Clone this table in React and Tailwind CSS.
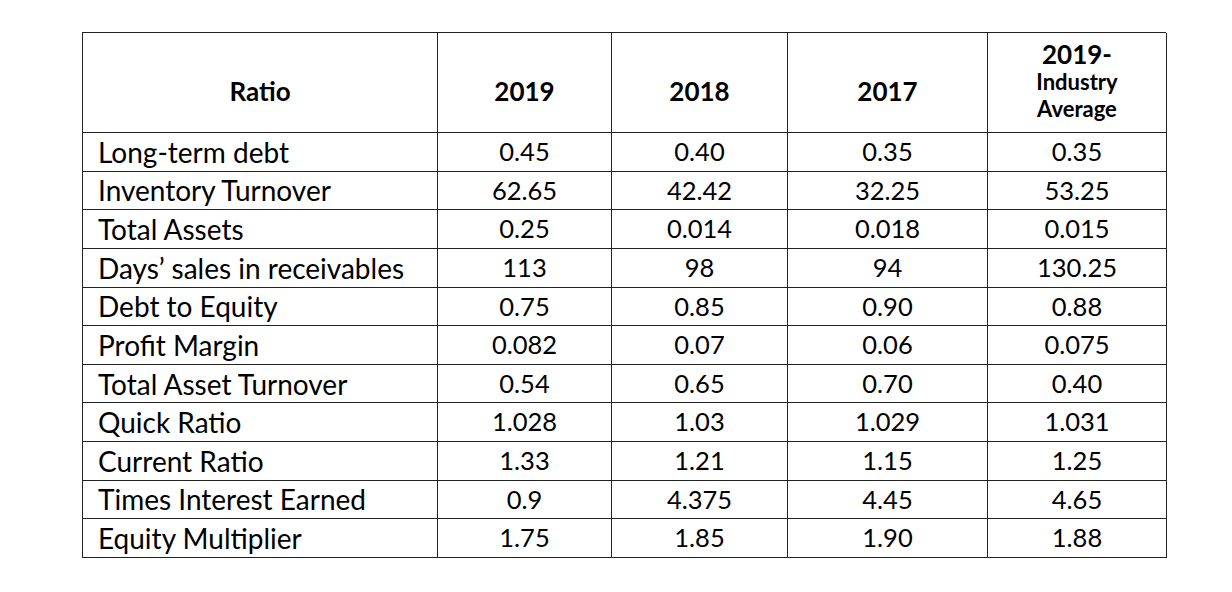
import React from "react";

const rows = [
  ["Long-term debt", "0.45", "0.40", "0.35", "0.35"],
  ["Inventory Turnover", "62.65", "42.42", "32.25", "53.25"],
  ["Total Assets", "0.25", "0.014", "0.018", "0.015"],
  ["Days’ sales in receivables", "113", "98", "94", "130.25"],
  ["Debt to Equity", "0.75", "0.85", "0.90", "0.88"],
  ["Profit Margin", "0.082", "0.07", "0.06", "0.075"],
  ["Total Asset Turnover", "0.54", "0.65", "0.70", "0.40"],
  ["Quick Ratio", "1.028", "1.03", "1.029", "1.031"],
  ["Current Ratio", "1.33", "1.21", "1.15", "1.25"],
  ["Times Interest Earned", "0.9", "4.375", "4.45", "4.65"],
  ["Equity Multiplier", "1.75", "1.85", "1.90", "1.88"],
];

export default function App() {
  return (
    <div
      className="w-[1232px] h-[592px] bg-white text-black overflow-hidden"
      style={{ fontFamily: "Lato, 'Liberation Sans', sans-serif" }}
    >
      <div className="ml-[82px] mt-[32px] w-[1084px] grid grid-cols-[355px_174px_176px_200px_179px] grid-rows-[100px_repeat(11,38.64px)] border-l border-t border-[#222]">
        <div className="border-r border-b border-[#222] flex items-center justify-center pt-[18px] font-bold text-[26px]">Ratio</div>
        <div className="border-r border-b border-[#222] flex items-center justify-center pt-[18px] font-bold text-[26px]">2019</div>
        <div className="border-r border-b border-[#222] flex items-center justify-center pt-[18px] font-bold text-[26px]">2018</div>
        <div className="border-r border-b border-[#222] flex items-center justify-center pt-[18px] font-bold text-[26px]">2017</div>
        <div className="border-r border-b border-[#222] flex flex-col items-center justify-center font-bold pb-[2px]">
          <div className="text-[26px] leading-[28px]">2019-</div>
          <div className="text-[22px] leading-[27px]">Industry</div>
          <div className="text-[22px] leading-[28px]">Average</div>
        </div>
        {rows.map((r, i) => (
          <React.Fragment key={i}>
            <div className="border-r border-b border-[#222] flex items-center pl-[15px] text-[28px] leading-none whitespace-nowrap">{r[0]}</div>
            {r.slice(1).map((v, j) => (
              <div key={j} className="border-r border-b border-[#222] flex items-center justify-center text-[25.5px] leading-none">{v}</div>
            ))}
          </React.Fragment>
        ))}
      </div>
    </div>
  );
}
